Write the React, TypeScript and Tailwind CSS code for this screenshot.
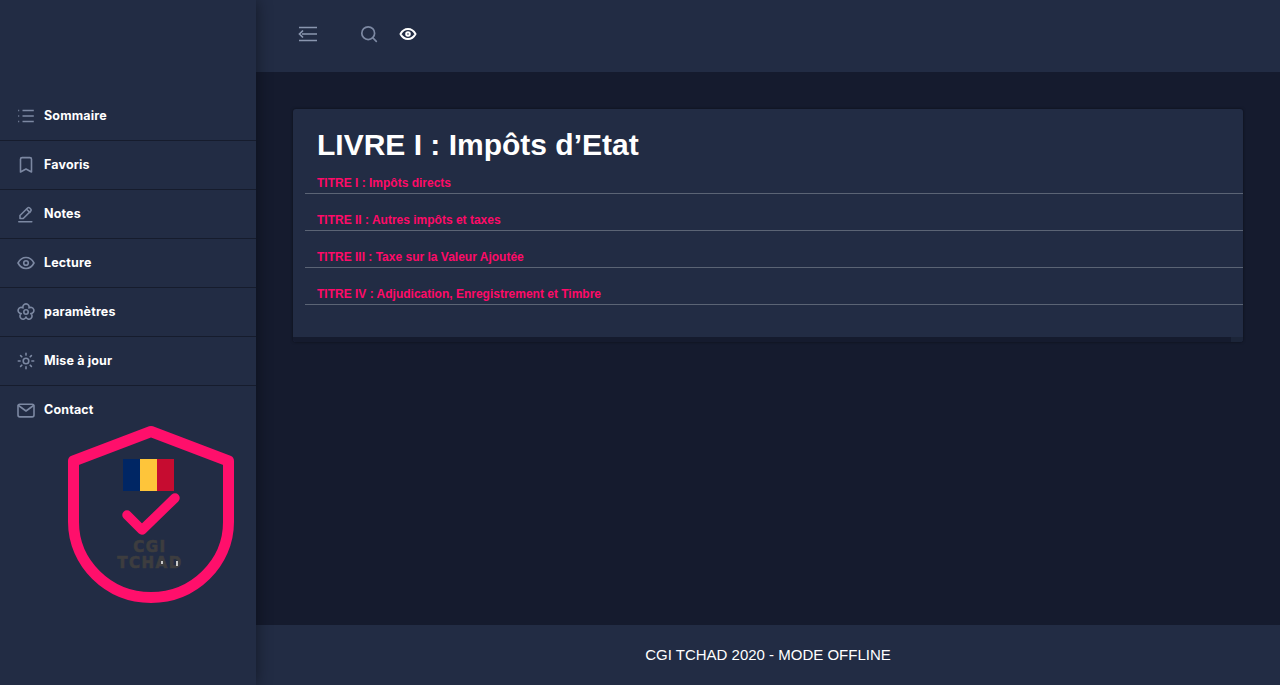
import React from "react";

const Ic = ({ children, cls = "text-[#7c88a2]", size = 18 }: { children: React.ReactNode; cls?: string; size?: number }) => (
  <svg width={size} height={size} viewBox="0 0 18 18" fill="none" stroke="currentColor" strokeWidth="1.6" strokeLinecap="round" strokeLinejoin="round" className={`shrink-0 ${cls}`}>
    {children}
  </svg>
);

const icons: Record<string, React.ReactNode> = {
  list: (
    <>
      <path d="M5.500 3.500H16.800M5.500 9H16.800M5.500 14.500H16.800" strokeWidth="1.700" strokeLinecap="butt" />
      <path d="M1.200 3.500H3M1.200 9H3M1.200 14.500H3" strokeWidth="1.700" strokeDasharray="1 1" strokeLinecap="butt" />
    </>
  ),
  bookmark: <path d="M3.500 3.200a1.600 1.600 0 0 1 1.600-1.600h7.800a1.600 1.600 0 0 1 1.600 1.600V16L9 13l-5.500 3z" />,
  pen: (
    <>
      <path d="M3 13.500v-3L10.600 3a1.500 1.500 0 0 1 2.100 0l1 1a1.500 1.500 0 0 1 0 2.100L6.200 13.500z" />
      <path d="M9.500 4.200l3.300 3.200" />
      <path d="M1.800 16.700h13" />
    </>
  ),
  eye: (
    <>
      <path d="M1 9c2-3.700 4.700-5.500 8-5.500S15 5.300 17 9c-2 3.700-4.700 5.500-8 5.500S3 12.700 1 9z" />
      <circle cx="9" cy="9" r="2.300" />
    </>
  ),
  flower: (
    <>
      <path d="M6.060 4.950A3.100 3.100 0 1 1 11.940 4.950A3.100 3.100 0 1 1 13.760 10.550A3.100 3.100 0 1 1 9 14A3.100 3.100 0 1 1 4.240 10.550A3.100 3.100 0 1 1 6.060 4.950z" />
      <circle cx="9" cy="9" r="2.200" />
    </>
  ),
  sun: (
    <>
      <circle cx="9" cy="9" r="2.800" />
      <path d="M9 1.300v1.800M9 14.900v1.800M1.300 9h1.800M14.900 9h1.800M3.600 3.600l1.200 1.200M13.200 13.200l1.200 1.200M3.600 14.400l1.200-1.200M13.200 4.800l1.200-1.200" />
    </>
  ),
  mail: (
    <>
      <rect x="1" y="2.300" width="16" height="12.600" rx="1.800" />
      <path d="M1.500 3.500l7.500 5.500L16.500 3.500" />
    </>
  ),
};

const items = [
  ["list", "Sommaire"],
  ["bookmark", "Favoris"],
  ["pen", "Notes"],
  ["eye", "Lecture"],
  ["flower", "paramètres"],
  ["sun", "Mise à jour"],
  ["mail", "Contact"],
];

const titres = [
  "TITRE I : Impôts directs",
  "TITRE II : Autres impôts et taxes",
  "TITRE III : Taxe sur la Valeur Ajoutée",
  "TITRE IV : Adjudication, Enregistrement et Timbre",
];

function Logo() {
  return (
    <svg width="170" height="182" viewBox="0 0 170 182" className="block">
      <path d="M85 9.500L162.500 39V100C162.500 141 128 175.500 85 175.500C42 175.500 7.500 141 7.500 100V39Z" fill="none" stroke="#ff0f6b" strokeWidth="11" strokeLinejoin="round" />
      <rect x="57" y="37" width="17" height="32" fill="#002664" />
      <rect x="74" y="37" width="17" height="32" fill="#fec53a" />
      <rect x="91" y="37" width="17" height="32" fill="#c60c30" />
      <path d="M61 93L76 108L109 76" fill="none" stroke="#ff0f6b" strokeWidth="9.500" strokeLinecap="round" strokeLinejoin="round" />
      <text x="84" y="130" textAnchor="middle" fontFamily="'DejaVu Sans', sans-serif" fontWeight="700" fontSize="15" letterSpacing="1.500" stroke="#3d3d3f" strokeWidth="0.700" fill="#3d3d3f">CGI</text>
      <text x="84" y="146" textAnchor="middle" fontFamily="'DejaVu Sans', sans-serif" fontWeight="700" fontSize="15" letterSpacing="1.500" stroke="#3d3d3f" strokeWidth="0.700" fill="#3d3d3f">TCHAD</text>
      <rect x="95" y="139" width="2" height="3" fill="#c8c8c8" />
      <rect x="110" y="139" width="2" height="5" fill="#c8c8c8" />
    </svg>
  );
}

export default function App() {
  return (
    <div className="flex h-[685px] w-[1280px] overflow-hidden bg-[#151b2e] font-['Liberation_Sans',sans-serif]">
      <aside className="relative z-10 flex w-[256px] shrink-0 flex-col bg-[#222c44] pt-[92px] shadow-[0_0_15px_rgba(0,0,0,0.45)]">
        {items.map(([ic, label], i) => (
          <div key={label} className={`flex h-[49px] items-center gap-[9px] pl-[17px] ${i < 6 ? "border-b border-[#161c2d]" : ""}`}>
            <Ic>{icons[ic]}</Ic>
            <span className="font-['Inter',sans-serif] text-[12.500px] font-bold tracking-[0.15px] text-white">{label}</span>
          </div>
        ))}
        <div className="-mt-[13px] ml-[66px]">
          <Logo />
        </div>
      </aside>
      <div className="flex min-w-0 flex-1 flex-col">
        <header className="flex h-[72px] shrink-0 items-center bg-[#222c44] pb-[4px] pl-[42px]">
          <svg width="20" height="18" viewBox="0 0 20 18" fill="none" stroke="#8a96af" strokeWidth="1.700" className="shrink-0">
            <path d="M1 2.500H19M4 9H19M1 15.500H19" />
            <path d="M5 5.500L1.500 9L5 12.500" />
          </svg>
          <svg width="18" height="18" viewBox="0 0 18 18" fill="none" stroke="#7d89a3" strokeWidth="1.700" strokeLinecap="round" className="ml-[42px] shrink-0">
            <circle cx="8.200" cy="8.200" r="6.400" />
            <path d="M13 13l3.300 3.300" />
          </svg>
          <Ic cls="ml-[21px] text-white">
            <g strokeWidth="2">
              <path d="M1.500 9c1.800-3.300 4.300-5 7.500-5s5.700 1.700 7.500 5c-1.800 3.300-4.300 5-7.500 5s-5.700-1.700-7.500-5z" />
              <circle cx="9" cy="9" r="1.800" />
            </g>
          </Ic>
        </header>
        <main className="flex-1 px-[37px] pt-[37px]">
          <section className="overflow-hidden rounded-[3px] bg-[#222c44] shadow-[0_0_3px_rgba(0,0,0,0.5)]">
            <div className="h-[228px] pl-[12px] pt-[19px]">
              <h1 className="pl-[12px] text-[30px] font-bold leading-[34px] text-white">LIVRE I : Impôts d’Etat</h1>
              <div className="mt-[14px]">
                {titres.map((t, i) => (
                  <div key={t} className={`border-b border-[#5b6475] pb-[2px] pl-[12px] text-[12px] font-bold leading-[15px] text-[#ff0a68] ${i ? "mt-[19px]" : ""}`}>
                    {t}
                  </div>
                ))}
              </div>
            </div>
            <div className="flex h-[5px]">
              <div className="flex-1 bg-[#151b2e]" />
              <div className="w-[12px] bg-[#1c2539]" />
            </div>
          </section>
        </main>
        <footer className="flex h-[60px] shrink-0 items-center justify-center bg-[#222c44] text-[15px] text-white">
          CGI TCHAD 2020 - MODE OFFLINE
        </footer>
      </div>
    </div>
  );
}
